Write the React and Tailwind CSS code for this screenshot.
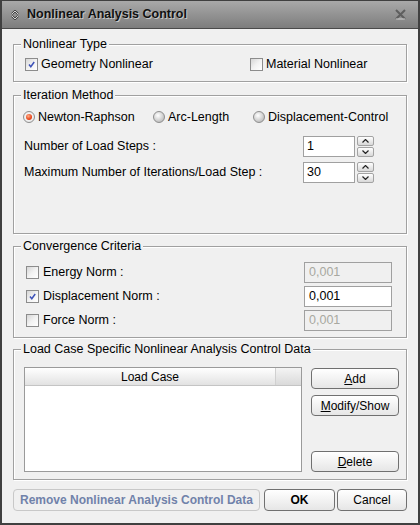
import React from "react";

const font = { fontFamily: '"Liberation Sans", Arial, sans-serif' };

const CheckBox = ({ checked }) => (
  <span className="relative flex h-[13px] w-[13px] shrink-0 items-center justify-center border border-[#8c8c8c] bg-gradient-to-br from-[#d6d6d6] via-[#f2f2f2] to-white">
    {checked && (
      <svg width="9" height="9" viewBox="0 0 9 9">
        <path d="M2 4.5 L3.8 6.8 L7.2 2" fill="none" stroke="#3d52b8" strokeWidth="1.5" />
      </svg>
    )}
  </span>
);

const Radio = ({ checked }) => (
  <span
    className={`flex h-[12px] w-[12px] shrink-0 items-center justify-center rounded-full border border-[#8e8e8e] ${
      checked
        ? "bg-[radial-gradient(circle_at_45%_45%,#ffffff,#e0e0e0)]"
        : "bg-[radial-gradient(circle_at_40%_35%,#ffffff,#c4c4c4_70%,#a8a8a8)]"
    }`}
  >
    {checked && <span className="h-[6px] w-[6px] rounded-full bg-[radial-gradient(circle_at_40%_35%,#ffb08a,#e8461c_60%,#c23812)]" />}
  </span>
);

const Group = ({ title, className, children }) => (
  <div className={`relative border border-[#a0a0a0] shadow-[1px_1px_0_0_#ffffff,inset_1px_1px_0_0_#ffffff] ${className}`}>
    <span className="absolute left-[7px] top-[-9px] bg-[#f0f0f0] px-[2px] text-[12.5px] leading-[16px] text-black">
      {title}
    </span>
    {children}
  </div>
);

const SpinBtn = ({ up }) => (
  <span className="flex h-[10px] w-[17px] items-center justify-center rounded-[2px] border border-[#a3a3a3] bg-gradient-to-b from-white to-[#d8d8d8]">
    <svg width="7" height="4" viewBox="0 0 7 4">
      <path d={up ? "M0.5 3.5 L3.5 0.5 L6.5 3.5" : "M0.5 0.5 L3.5 3.5 L6.5 0.5"} fill="none" stroke="#222" strokeWidth="1.2" />
    </svg>
  </span>
);

const NumRow = ({ label, value, className }) => (
  <div className={`flex h-[21px] items-center pl-[10px] pr-[32px] ${className}`}>
    <span className="flex-1 text-[12.5px]">{label}</span>
    <span className="flex h-[21px] w-[52px] items-center border border-[#a0a0a0] bg-white pl-[3px] text-[12.5px]">
      {value}
    </span>
    <span className="ml-[2px] flex flex-col gap-[1px]">
      <SpinBtn up />
      <SpinBtn />
    </span>
  </div>
);

const NormRow = ({ label, checked, className }) => (
  <div className={`flex h-[21px] items-center pl-[12px] pr-[14px] ${className}`}>
    <CheckBox checked={checked} />
    <span className="ml-[4px] flex-1 text-[12.5px]">{label}</span>
    <span
      className={`flex h-[21px] w-[88px] items-center border border-[#a0a0a0] pl-[4px] text-[12.5px] ${
        checked ? "bg-white text-black" : "bg-[#f0f0f0] text-[#a8a8a0]"
      }`}
    >
      0,001
    </span>
  </div>
);

const Btn = ({ children, className }) => (
  <button className={`flex h-[21px] items-center justify-center rounded-[4px] border border-[#707070] bg-gradient-to-b from-white to-[#e6e6e6] text-[12px] text-black ${className}`}>
    {children}
  </button>
);

export default function App() {
  return (
    <div style={font} className="flex h-[525px] w-[420px] flex-col border-x-2 border-b-2 border-t border-[#404040] bg-[#f0f0f0] text-black">
      {/* title bar */}
      <div className="flex h-[28px] shrink-0 items-center border-b border-[#4a4a4a] bg-gradient-to-b from-[#a9a9a9] to-[#7d7d7d] pl-[9px] pr-[12px]">
        <svg width="8" height="10" viewBox="0 0 8 10">
          <path d="M1 4 L4 1 L7 4 M1 6 L4 9 L7 6" fill="none" stroke="#3a3a3a" strokeWidth="2" />
          <path d="M1 4 L4 1 L7 4 M1 6 L4 9 L7 6" fill="none" stroke="#e6e6e6" strokeWidth="0.9" />
        </svg>
        <span className="ml-[8px] text-[12.5px] font-bold text-[#111] [text-shadow:1px_1px_0_#c8c8c8]">
          Nonlinear Analysis Control
        </span>
        <svg className="ml-auto" width="11" height="11" viewBox="0 0 11 11">
          <path d="M1 1 L10 10 M10 1 L1 10" stroke="#5e5e5e" strokeWidth="2" />
          <path d="M1 10 L10 10" stroke="#d0d0d0" strokeWidth="1" />
        </svg>
      </div>

      <div className="flex flex-1 flex-col px-[11px]">
        <Group title="Nonlinear Type" className="mt-[15px] h-[38px]">
          <div className="mt-[11px] flex h-[16px] items-center pl-[11px] text-[12.5px]">
            <label className="flex w-[225px] items-center">
              <CheckBox checked />
              <span className="ml-[3px]">Geometry Nonlinear</span>
            </label>
            <label className="flex items-center">
              <CheckBox />
              <span className="ml-[3px]">Material Nonlinear</span>
            </label>
          </div>
        </Group>

        <Group title="Iteration Method" className="mt-[13px] h-[139px]">
          <div className="mt-[13px] flex h-[16px] items-center pl-[9px] text-[12.5px]">
            <label className="flex w-[130px] items-center">
              <Radio checked />
              <span className="ml-[3px]">Newton-Raphson</span>
            </label>
            <label className="flex w-[100px] items-center">
              <Radio />
              <span className="ml-[3px]">Arc-Length</span>
            </label>
            <label className="flex items-center">
              <Radio />
              <span className="ml-[3px]">Displacement-Control</span>
            </label>
          </div>
          <NumRow label="Number of Load Steps :" value="1" className="mt-[11px]" />
          <NumRow label="Maximum Number of Iterations/Load Step :" value="30" className="mt-[5px]" />
        </Group>

        <Group title="Convergence Criteria" className="mt-[12px] h-[92px]">
          <NormRow label="Energy Norm :" className="mt-[15px]" />
          <NormRow label="Displacement Norm :" checked className="mt-[3px]" />
          <NormRow label="Force Norm :" className="mt-[3px]" />
        </Group>

        <Group title="Load Case Specific Nonlinear Analysis Control Data" className="mt-[11px] h-[131px]">
          <div className="mt-[17px] flex pl-[10px] pr-[7px]">
            <div className="flex h-[105px] w-[278px] flex-col border border-[#9a9a9a] bg-white">
              <div className="flex h-[18px] border-b border-[#c4c4c4] bg-gradient-to-b from-white to-[#e2e2e2] text-[12px]">
                <span className="flex flex-1 items-center justify-center border-r border-[#d0d0d0]">Load Case</span>
                <span className="w-[25px] bg-gradient-to-b from-[#f4f4f4] to-[#dadada]" />
              </div>
            </div>
            <div className="ml-auto flex h-[105px] w-[88px] flex-col">
              <Btn className="mt-[1px]">
                <span><u>A</u>dd</span>
              </Btn>
              <Btn className="mt-[6px]">
                <span><u>M</u>odify/Show</span>
              </Btn>
              <Btn className="mt-auto">
                <span><u>D</u>elete</span>
              </Btn>
            </div>
          </div>
        </Group>

        <div className="mt-[9px] flex h-[22px]">
          <button className="h-[22px] w-[247px] rounded-[4px] border border-[#c8c8c8] bg-[#f0f0f0] text-[12px] font-bold text-[#7082aa]">
            Remove Nonlinear Analysis Control Data
          </button>
          <Btn className="ml-[4px] h-[22px] w-[71px] font-bold">OK</Btn>
          <Btn className="ml-[2px] h-[22px] w-[70px]">Cancel</Btn>
        </div>
      </div>
    </div>
  );
}
